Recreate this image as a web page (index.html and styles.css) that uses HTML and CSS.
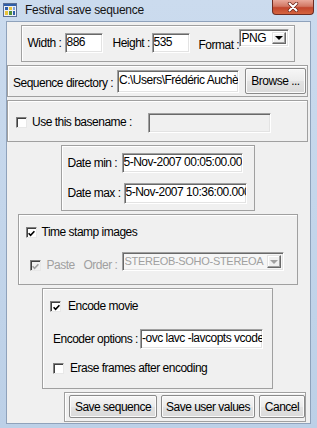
FILE: index.html
```html
<!DOCTYPE html>
<html lang="en">
<head>
<meta charset="UTF-8">
<title>Festival save sequence</title>
<link rel="stylesheet" href="styles.css">
</head>
<body>
<div class="window">
    <div class="titlebar">
        <svg class="app-icon" width="14" height="14" viewBox="0 0 14 14">
            <rect x="0.5" y="0.5" width="13" height="13" fill="#eef0f4" stroke="#5a6f96"/>
            <rect x="1" y="1" width="12" height="2" fill="#2f5ea8"/>
            <rect x="2" y="4" width="3" height="3" fill="#2f5ea8"/>
            <rect x="6" y="4" width="3" height="3" fill="#e8c23a"/>
            <rect x="10" y="4" width="2" height="3" fill="#7fa2d8"/>
            <rect x="2" y="8" width="3" height="4" fill="#e8c23a"/>
            <rect x="6" y="8" width="3" height="4" fill="#4f8f3a"/>
            <rect x="10" y="8" width="2" height="4" fill="#2f5ea8"/>
        </svg>
        <span class="title">Festival save sequence</span>
        <div class="close-btn">
            <svg width="14" height="10" viewBox="0 0 14 10">
                <path d="M3.5 1.5 L10.5 8.5 M10.5 1.5 L3.5 8.5" stroke="#6b2418" stroke-width="3.4" stroke-linecap="round"/>
                <path d="M3.5 1.5 L10.5 8.5 M10.5 1.5 L3.5 8.5" stroke="#fff" stroke-width="2" stroke-linecap="round"/>
            </svg>
        </div>
    </div>

    <div class="client">
        <!-- image size and format -->
        <div class="panel panel-size">
            <span class="lbl lbl-width">Width :</span>
            <input class="field f-small" type="text" value="886">
            <span class="lbl lbl-height">Height :</span>
            <input class="field f-small" type="text" value="535">
            <span class="lbl lbl-format">Format :</span>
            <div class="combo combo-format">
                <span class="combo-text">PNG</span>
                <span class="combo-btn"><i class="arrow"></i></span>
            </div>
        </div>

        <div class="panel panel-dir">
            <span class="lbl lbl-dir">Sequence directory :</span>
            <input class="field f-dir" type="text" value="C:\Users\Frédéric Auchère\Documents">
            <button class="btn btn-browse">Browse ...</button>
        </div>

        <div class="panel panel-base">
            <span class="box"></span>
            <span class="lbl lbl-base">Use this basename :</span>
            <input class="field f-base" type="text" value="" disabled>
        </div>

        <!-- time range -->
        <div class="panel panel-date">
            <div class="row">
                <span class="lbl lbl-dmin">Date min :</span>
                <input class="field f-dmin" type="text" value="5-Nov-2007 00:05:00.000">
            </div>
            <div class="row row-dmax">
                <span class="lbl lbl-dmax">Date max :</span>
                <input class="field f-dmax" type="text" value="5-Nov-2007 10:36:00.000">
            </div>
        </div>

        <div class="panel panel-stamp">
            <div class="row row-check">
                <span class="box checked">
                    <svg width="7" height="7" viewBox="0 0 7 7"><path d="M0.6 3.2 L2.6 5.3 L6.4 1.2" fill="none" stroke="#000" stroke-width="1.6"/></svg>
                </span>
                <span class="lbl">Time stamp images</span>
            </div>
            <div class="row row-paste">
                <span class="box checked disabled">
                    <svg width="7" height="7" viewBox="0 0 7 7"><path d="M0.6 3.2 L2.6 5.3 L6.4 1.2" fill="none" stroke="#a0a0a0" stroke-width="1.6"/></svg>
                </span>
                <span class="lbl grey lbl-paste">Paste</span>
                <span class="lbl grey lbl-order">Order :</span>
                <div class="combo combo-order disabled">
                    <span class="combo-text">STEREOB-SOHO-STEREOA</span>
                    <span class="combo-btn"><i class="arrow"></i></span>
                </div>
            </div>
        </div>

        <!-- movie encoding -->
        <div class="panel panel-movie">
            <div class="row row-check">
                <span class="box checked">
                    <svg width="7" height="7" viewBox="0 0 7 7"><path d="M0.6 3.2 L2.6 5.3 L6.4 1.2" fill="none" stroke="#000" stroke-width="1.6"/></svg>
                </span>
                <span class="lbl lbl-encode">Encode movie</span>
            </div>
            <div class="row row-opts">
                <span class="lbl lbl-opts">Encoder options :</span>
                <input class="field f-opts" type="text" value="-ovc lavc -lavcopts vcodec=mpeg4">
            </div>
            <div class="row row-check row-erase">
                <span class="box"></span>
                <span class="lbl">Erase frames after encoding</span>
            </div>
        </div>

        <div class="panel panel-buttons">
            <button class="btn btn-save">Save sequence</button>
            <button class="btn btn-user">Save user values</button>
            <button class="btn btn-cancel">Cancel</button>
        </div>
    </div>
</div>
</body>
</html>
```

FILE: styles.css
```css
body {
    margin: 0;
    background: #c3d5ea;
    font-family: "Liberation Sans", Arial, sans-serif;
    font-size: 12px;
    letter-spacing: -0.5px;
    color: #000;
}
.window {
    width: 317px;
    height: 428px;
    box-sizing: border-box;
    padding: 0 6px 4px 6px;
    background: linear-gradient(to bottom, #cbdbee, #bcd0e7);
}
.titlebar {
    height: 21px;
    display: flex;
    align-items: flex-start;
}
.app-icon {
    margin: 3px 0 0 -3px;
}
.title {
    margin: 4px 0 0 8px;
    font-size: 12px;
    line-height: 13px;
    letter-spacing: -0.3px;
    color: #141414;
}
.close-btn {
    margin-left: auto;
    margin-right: -3px;
    width: 42px;
    height: 15px;
    box-sizing: border-box;
    border: 1px solid #6e2c22;
    border-top: none;
    border-radius: 0 0 4px 4px;
    background: linear-gradient(to bottom, #e9a99b, #d27864 45%, #c2462d 55%, #d5643f);
    display: flex;
    align-items: center;
    justify-content: center;
}
.client {
    height: 403px;
    box-sizing: border-box;
    border: 1px solid #8fa2bb;
    background: #f0f0f0;
    padding: 3px 2px 0 0;
    display: flex;
    flex-direction: column;
    align-items: center;
    gap: 3px;
}

.panel {
    box-sizing: border-box;
    border: 1px solid #a0a0a0;
    box-shadow: inset 1px 1px 0 #fff;
    display: flex;
}
.lbl {
    line-height: 13px;
    white-space: nowrap;
}
.grey {
    color: #a0a0a0;
}
.row {
    display: flex;
}

/* text fields */
.field {
    box-sizing: border-box;
    margin: 0;
    padding: 0 0 3px 1px;
    font: inherit;
    letter-spacing: inherit;
    color: #000;
    background: #fff;
    border: 1px solid;
    border-color: #a0a0a0 #fff #fff #a0a0a0;
    box-shadow: inset 1px 1px 0 #696969, inset -1px -1px 0 #e3e3e3;
    outline: none;
}
.field:disabled {
    background: #f0f0f0;
}

/* combo boxes */
.combo {
    box-sizing: border-box;
    display: flex;
    padding: 2px;
    background: #fff;
    border: 1px solid;
    border-color: #a0a0a0 #fff #fff #a0a0a0;
    box-shadow: inset 1px 1px 0 #696969, inset -1px -1px 0 #e3e3e3;
}
.combo-text {
    flex: 1;
    overflow: hidden;
    white-space: nowrap;
    line-height: 13px;
}
.combo-btn {
    width: 14px;
    flex: none;
    box-sizing: border-box;
    border: 1px solid;
    border-color: #e3e3e3 #696969 #696969 #e3e3e3;
    box-shadow: inset -1px -1px 0 #a0a0a0, inset 1px 1px 0 #fff;
    background: #f0f0f0;
    display: flex;
    align-items: center;
    justify-content: center;
}
.arrow {
    width: 0;
    height: 0;
    border-left: 4px solid transparent;
    border-right: 4px solid transparent;
    border-top: 4px solid #000;
}
.combo.disabled {
    background: #f6f6f6;
    color: #a0a0a0;
}
.combo.disabled .arrow {
    border-top-color: #a0a0a0;
}

/* check boxes */
.box {
    width: 11px;
    height: 11px;
    flex: none;
    box-sizing: border-box;
    background: #fff;
    border: 1px solid;
    border-color: #808080 #e8e8e8 #e8e8e8 #808080;
    box-shadow: inset 1px 1px 0 #404040;
    display: flex;
    align-items: center;
    justify-content: center;
    padding: 1px 0 0 1px;
}
.box.disabled {
    background: #f0f0f0;
}

/* buttons */
.btn {
    box-sizing: border-box;
    margin: 0;
    padding: 0;
    font: inherit;
    letter-spacing: inherit;
    white-space: nowrap;
    color: #000;
    border: 1px solid #8a8a8a;
    border-radius: 2px;
    background: linear-gradient(to bottom, #f6f6f6, #ebebeb 50%, #e2e2e2 51%, #dadada);
    box-shadow: inset 0 0 0 1px #fbfbfb;
}

/* width / height / format */
.panel-size {
    width: 274px;
    height: 37px;
    padding: 3px 0 0 6px;
    align-items: flex-start;
}
.panel-size .lbl {
    margin-top: 8px;
}
.lbl-width {
    width: 37px;
}
.f-small {
    width: 38px;
    height: 20px;
    margin-top: 4px;
}
.lbl-height {
    width: 39px;
    margin-left: 10px;
}
.panel-size .lbl-format {
    width: 40px;
    margin-left: 9px;
    margin-top: 10px;
}
.combo-format {
    width: 50px;
    height: 18px;
}

/* sequence directory */
.panel-dir {
    width: 301px;
    height: 32px;
    padding: 0 1px 0 5px;
    align-items: center;
}
.lbl-dir {
    width: 104px;
    padding-top: 4px;
}
.f-dir {
    width: 122px;
    height: 23px;
}
.btn-browse {
    width: 61px;
    height: 26px;
    margin-left: 6px;
}

/* basename */
.panel-base {
    width: 301px;
    height: 42px;
    padding: 3px 0 0 8px;
    align-items: center;
}
.lbl-base {
    width: 116px;
    margin-left: 5px;
}
.f-base {
    width: 123px;
    height: 20px;
}

/* dates */
.panel-date {
    width: 194px;
    height: 66px;
    flex-direction: column;
    padding: 7px 0 0 6px;
}
.panel-date .row {
    align-items: center;
}
.row-dmax {
    margin-top: 10px;
}
.lbl-dmin {
    width: 54px;
}
.f-dmin {
    width: 121px;
    height: 20px;
}
.lbl-dmax {
    width: 56px;
}
.f-dmax {
    width: 123px;
    height: 21px;
}

/* time stamp */
.panel-stamp {
    width: 280px;
    height: 71px;
    flex-direction: column;
    padding: 12px 0 0 7px;
}
.row-check {
    align-items: center;
    height: 11px;
}
.row-check .lbl {
    margin-left: 5px;
}
.row-paste {
    margin-top: 14px;
    padding-left: 4px;
    align-items: flex-start;
}
.row-paste .box {
    margin-top: 8px;
}
.row-paste .lbl {
    margin-top: 7px;
}
.lbl-paste {
    width: 37px;
    margin-left: 6px;
}
.lbl-order {
    width: 38px;
}
.combo-order {
    width: 162px;
    height: 19px;
    font-size: 11px;
    letter-spacing: -0.3px;
}

/* movie */
.panel-movie {
    width: 231px;
    height: 101px;
    flex-direction: column;
    padding: 12px 0 0 7px;
}
.row-check .lbl-encode {
    margin-left: 7px;
}
.row-opts {
    margin-top: 17px;
    padding-left: 3px;
    align-items: center;
}
.lbl-opts {
    width: 87px;
}
.f-opts {
    width: 123px;
    height: 20px;
}
.row-erase {
    margin-top: 14px;
    padding-left: 3px;
}
.row-erase .lbl {
    margin-left: 6px;
}

/* bottom buttons */
.panel-buttons {
    align-self: flex-end;
    margin-right: 2px;
    width: 242px;
    height: 30px;
    padding: 2px 0 0 4px;
    align-items: flex-start;
    gap: 4px;
}
.panel-buttons .btn {
    height: 23px;
}
.btn-save {
    width: 88px;
}
.btn-user {
    width: 94px;
}
.btn-cancel {
    width: 46px;
}
```
